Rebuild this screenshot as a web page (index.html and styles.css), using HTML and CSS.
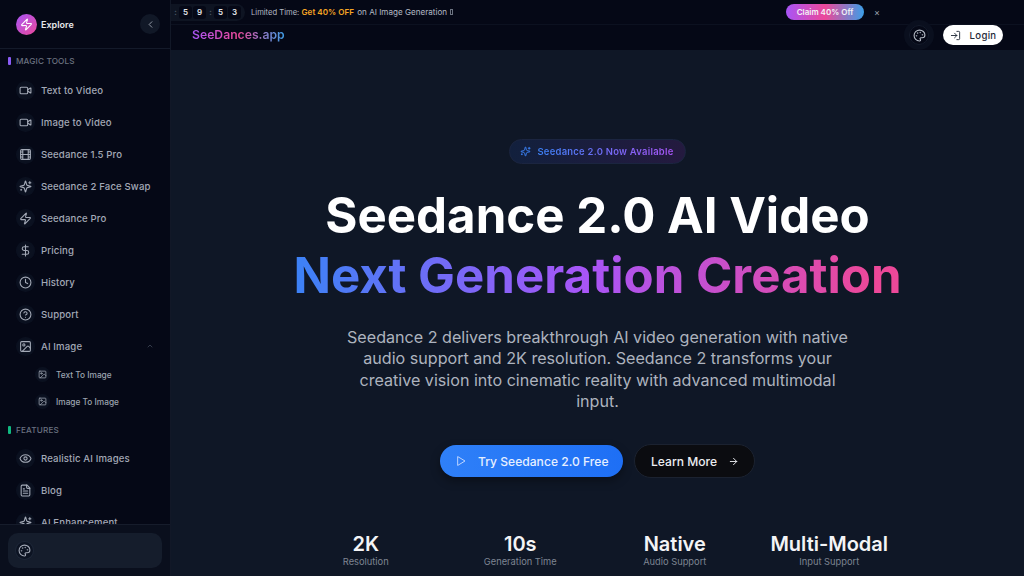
FILE: index.html
```html
<!DOCTYPE html>
<html lang="en">
<head>
<meta charset="utf-8">
<title>SeeDances.app</title>
<link rel="stylesheet" href="styles.css">
</head>
<body>
<svg class="defs" width="0" height="0" aria-hidden="true">
  <symbol id="i-video" viewBox="0 0 24 24"><path d="m16 13 5.223 3.482a.5.5 0 0 0 .777-.416V7.87a.5.5 0 0 0-.752-.432L16 10.5"/><rect x="2" y="6" width="14" height="12" rx="2"/></symbol>
  <symbol id="i-film" viewBox="0 0 24 24"><rect x="3" y="3" width="18" height="18" rx="2"/><path d="M7 3v18M3 7.5h4M3 12h18M3 16.5h4M17 3v18M17 7.5h4M17 16.5h4"/></symbol>
  <symbol id="i-sparkles" viewBox="0 0 24 24"><path d="M9.937 15.5A2 2 0 0 0 8.5 14.063l-6.135-1.582a.5.5 0 0 1 0-.962L8.5 9.936A2 2 0 0 0 9.937 8.5l1.582-6.135a.5.5 0 0 1 .963 0L14.063 8.5A2 2 0 0 0 15.5 9.937l6.135 1.581a.5.5 0 0 1 0 .964L15.5 14.063a2 2 0 0 0-1.437 1.437l-1.582 6.135a.5.5 0 0 1-.963 0z"/><path d="M20 3v4M22 5h-4M4 17v2M5 18H3"/></symbol>
  <symbol id="i-zap" viewBox="0 0 24 24"><path d="M4 14a1 1 0 0 1-.78-1.63l9.9-10.2a.5.5 0 0 1 .86.46l-1.92 6.02A1 1 0 0 0 13 10h7a1 1 0 0 1 .78 1.63l-9.9 10.2a.5.5 0 0 1-.86-.46l1.92-6.02A1 1 0 0 0 11 14z"/></symbol>
  <symbol id="i-dollar" viewBox="0 0 24 24"><path d="M12 2v20M17 5H9.5a3.5 3.5 0 0 0 0 7h5a3.5 3.5 0 0 1 0 7H6"/></symbol>
  <symbol id="i-clock" viewBox="0 0 24 24"><circle cx="12" cy="12" r="10"/><path d="M12 6v6l4 2"/></symbol>
  <symbol id="i-help" viewBox="0 0 24 24"><circle cx="12" cy="12" r="10"/><path d="M9.09 9a3 3 0 0 1 5.83 1c0 2-3 3-3 3M12 17h.01"/></symbol>
  <symbol id="i-image" viewBox="0 0 24 24"><rect x="3" y="3" width="18" height="18" rx="2"/><circle cx="9" cy="9" r="2"/><path d="m21 15-3.086-3.086a2 2 0 0 0-2.828 0L6 21"/></symbol>
  <symbol id="i-eye" viewBox="0 0 24 24"><path d="M2.062 12.348a1 1 0 0 1 0-.696 10.75 10.75 0 0 1 19.876 0 1 1 0 0 1 0 .696 10.75 10.75 0 0 1-19.876 0"/><circle cx="12" cy="12" r="3"/></symbol>
  <symbol id="i-file" viewBox="0 0 24 24"><path d="M15 2H6a2 2 0 0 0-2 2v16a2 2 0 0 0 2 2h12a2 2 0 0 0 2-2V7Z"/><path d="M14 2v4a2 2 0 0 0 2 2h4M10 9H8M16 13H8M16 17H8"/></symbol>
  <symbol id="i-palette" viewBox="0 0 24 24"><path d="M12 22a1 1 0 0 1 0-20 10 9 0 0 1 10 9 5 5 0 0 1-5 5h-2.25a1.75 1.75 0 0 0-1.4 2.8l.3.4a1.75 1.75 0 0 1-1.4 2.8z"/><circle cx="13.5" cy="6.5" r=".5"/><circle cx="17.5" cy="10.5" r=".5"/><circle cx="6.5" cy="12.5" r=".5"/><circle cx="8.5" cy="7.5" r=".5"/></symbol>
  <symbol id="i-login" viewBox="0 0 24 24"><path d="m10 17 5-5-5-5M15 12H3M15 3h4a2 2 0 0 1 2 2v14a2 2 0 0 1-2 2h-4"/></symbol>
  <symbol id="i-play" viewBox="0 0 24 24"><path d="M6 3.5 20 12 6 20.5z"/></symbol>
  <symbol id="i-arrow" viewBox="0 0 24 24"><path d="M5 12h14M12 5l7 7-7 7"/></symbol>
  <symbol id="i-left" viewBox="0 0 24 24"><path d="m15 18-6-6 6-6"/></symbol>
  <symbol id="i-up" viewBox="0 0 24 24"><path d="m18 15-6-6-6 6"/></symbol>
</svg>

<aside class="sidebar">
  <header class="side-head">
    <span class="logo"><svg class="ic ic-logo"><use href="#i-zap"/></svg></span>
    <span class="logo-text">Explore</span>
    <button class="collapse"><svg class="ic ic-collapse"><use href="#i-left"/></svg></button>
  </header>
  <nav class="side-nav">
    <h3 class="group group-purple">MAGIC TOOLS</h3>
    <a class="item"><span class="bubble"><svg class="ic"><use href="#i-video"/></svg></span>Text to Video</a>
    <a class="item"><span class="bubble"><svg class="ic"><use href="#i-video"/></svg></span>Image to Video</a>
    <a class="item"><span class="bubble"><svg class="ic"><use href="#i-film"/></svg></span>Seedance 1.5 Pro</a>
    <a class="item"><span class="bubble"><svg class="ic"><use href="#i-sparkles"/></svg></span>Seedance 2 Face Swap</a>
    <a class="item"><span class="bubble"><svg class="ic"><use href="#i-zap"/></svg></span>Seedance Pro</a>
    <a class="item"><span class="bubble"><svg class="ic"><use href="#i-dollar"/></svg></span>Pricing</a>
    <a class="item"><span class="bubble"><svg class="ic"><use href="#i-clock"/></svg></span>History</a>
    <a class="item"><span class="bubble"><svg class="ic"><use href="#i-help"/></svg></span>Support</a>
    <a class="item"><span class="bubble"><svg class="ic"><use href="#i-image"/></svg></span>AI Image<svg class="ic ic-up"><use href="#i-up"/></svg></a>
    <a class="sub"><span class="bubble bubble-sm"><svg class="ic ic-sm"><use href="#i-image"/></svg></span>Text To Image</a>
    <a class="sub"><span class="bubble bubble-sm"><svg class="ic ic-sm"><use href="#i-image"/></svg></span>Image To Image</a>
    <h3 class="group group-green">FEATURES</h3>
    <a class="item"><span class="bubble"><svg class="ic"><use href="#i-eye"/></svg></span>Realistic AI Images</a>
    <a class="item"><span class="bubble"><svg class="ic"><use href="#i-file"/></svg></span>Blog</a>
    <a class="item"><span class="bubble"><svg class="ic"><use href="#i-sparkles"/></svg></span>AI Enhancement</a>
  </nav>
  <footer class="side-foot">
    <div class="foot-card"><span class="bubble bubble-foot"><svg class="ic"><use href="#i-palette"/></svg></span></div>
  </footer>
</aside>

<main class="main">
  <div class="promo">
    <div class="timer">
      <span class="colon">:</span><b>5</b><b>9</b><span class="colon">:</span><b>5</b><b>3</b>
    </div>
    <span class="promo-text"><span class="promo-label">Limited Time:</span> <strong>Get 40% OFF</strong> on AI Image Generation <i class="tofu"></i></span>
    <a class="claim">Claim 40% Off</a>
    <span class="close">×</span>
  </div>
  <div class="topnav">
    <a class="brand">SeeDances.app</a>
    <span class="theme"><svg class="ic"><use href="#i-palette"/></svg></span>
    <a class="login"><svg class="ic ic-login"><use href="#i-login"/></svg>Login</a>
  </div>
  <section class="hero">
    <div class="badge"><svg class="ic ic-badge"><use href="#i-sparkles"/></svg><span>Seedance 2.0 Now Available</span></div>
    <h1 class="title">Seedance 2.0 AI Video<span class="title-grad">Next Generation Creation</span></h1>
    <p class="lead">Seedance 2 delivers breakthrough AI video generation with native audio support and 2K resolution. Seedance 2 transforms your creative vision into cinematic reality with advanced multimodal input.</p>
    <div class="cta">
      <a class="btn btn-primary"><svg class="ic ic-play"><use href="#i-play"/></svg>Try Seedance 2.0 Free</a>
      <a class="btn btn-dark">Learn More<svg class="ic ic-arrow"><use href="#i-arrow"/></svg></a>
    </div>
    <div class="stats">
      <div class="stat"><strong>2K</strong><span>Resolution</span></div>
      <div class="stat"><strong>10s</strong><span>Generation Time</span></div>
      <div class="stat"><strong>Native</strong><span>Audio Support</span></div>
      <div class="stat"><strong>Multi-Modal</strong><span>Input Support</span></div>
    </div>
  </section>
</main>
</body>
</html>
```
FILE: styles.css
```css
* { box-sizing: border-box; }
html, body { height: 100%; }
body {
  margin: 0;
  display: flex;
  height: 576px;
  overflow: hidden;
  background: #0f1726;
  color: #fff;
  font-family: Inter, "Liberation Sans", sans-serif;
}
.defs { position: absolute; }
a { color: inherit; text-decoration: none; }
h1, h3, p { margin: 0; }
.ic {
  width: 13px;
  height: 13px;
  fill: none;
  stroke: currentColor;
  stroke-width: 2;
  stroke-linecap: round;
  stroke-linejoin: round;
  flex: none;
}

/* Sidebar */
.sidebar {
  width: 171px;
  flex: none;
  display: flex;
  flex-direction: column;
  background: #050816;
  border-right: 1px solid #121827;
}
.side-head {
  height: 49px;
  flex: none;
  display: flex;
  align-items: center;
  padding: 0 10px 0 16px;
  border-bottom: 1px solid #141a2a;
}
.logo {
  width: 21px;
  height: 21px;
  border-radius: 50%;
  background: linear-gradient(135deg, #a855f7, #ec4899);
  display: flex;
  align-items: center;
  justify-content: center;
  color: #fff;
}
.logo-text { margin-left: 4px; font-size: 9px; font-weight: 600; color: #e5e7eb; }
.collapse {
  margin-left: auto;
  width: 20px;
  height: 20px;
  padding: 0;
  border: 0;
  border-radius: 50%;
  background: #111827;
  color: #9ca3af;
  display: flex;
  align-items: center;
  justify-content: center;
}
.ic-collapse { width: 11px; height: 11px; }
.side-nav {
  flex: 1;
  min-height: 0;
  overflow: hidden;
  padding: 6px 0 0;
}
.group {
  display: flex;
  align-items: center;
  gap: 5px;
  height: 12px;
  padding-left: 8px;
  margin-bottom: 7px;
  font-size: 8.2px;
  font-weight: 500;
  letter-spacing: .15px;
  color: #6b7280;
}
.group::before { content: ""; width: 3px; height: 8px; border-radius: 1px; }
.group-purple::before { background: #8b5cf6; }
.group-green::before { background: #10b981; }
.item {
  height: 32px;
  display: flex;
  align-items: center;
  gap: 7px;
  padding-left: 17px;
  padding-right: 16px;
  font-size: 9.6px;
  font-weight: 500;
  letter-spacing: .13px;
  white-space: nowrap;
  color: #a3a9b6;
}
.bubble {
  width: 17px;
  height: 17px;
  margin: 0;
  border-radius: 50%;
  background: #0b1120;
  box-shadow: 0 0 0 1px #0b1120;
  display: flex;
  align-items: center;
  justify-content: center;
  color: #a3a9b6;
  flex: none;
}
.ic-up { margin-left: auto; width: 8px; height: 8px; color: #4b5563; }
.sub {
  height: 27px;
  display: flex;
  align-items: center;
  gap: 7px;
  padding-left: 36px;
  font-size: 8.3px;
  font-weight: 500;
  color: #9ca3af;
}
.item + .sub { margin-top: -1px; }
.bubble-sm { width: 13px; height: 13px; }
.ic-sm { width: 9px; height: 9px; }
.sub + .group { margin-top: 9px; margin-bottom: 6px; }
.side-foot {
  height: 52px;
  flex: none;
  padding: 8px;
  background: #0a0f1d;
  border-top: 1px solid #161c2b;
}
.foot-card {
  height: 35px;
  border-radius: 10px;
  background: #151d2c;
  display: flex;
  align-items: center;
  padding-left: 8px;
}
.bubble-foot { background: #0c1322; box-shadow: 0 0 0 1px #1c2536; }

/* Main */
.main { flex: 1; min-width: 0; display: flex; flex-direction: column; }
.promo {
  height: 25px;
  flex: none;
  display: flex;
  align-items: center;
  background: #050816;
  border-bottom: 1px solid #0c1120;
}
.timer {
  width: 74px;
  height: 17px;
  display: flex;
  align-items: center;
  padding-left: 1px;
  border-radius: 0 9px 9px 0;
  background: #0e1422;
  font-size: 8px;
  font-weight: 600;
  color: #e5e7eb;
}
.timer b {
  width: 13px;
  height: 13px;
  margin-right: 1px;
  border-radius: 3px;
  background: #050816;
  font-weight: 600;
  display: flex;
  align-items: center;
  justify-content: center;
}
.colon { width: 7px; text-align: center; color: #4b5563; }
.promo-text { margin-left: 6px; font-size: 8.1px; color: #b4bac5; white-space: nowrap; }
.promo-label { font-size: 7.6px; }
.promo-text strong { font-weight: 600; color: #f5a524; margin-right: 1px; }
.tofu {
  display: inline-block;
  width: 3px;
  height: 6px;
  margin-left: 1px;
  border: 1px solid #6b7280;
}
.claim {
  margin-left: auto;
  width: 78px;
  height: 16px;
  border-radius: 8px;
  background: linear-gradient(90deg, #a855f7, #ec4899 50%, #3b9fe8);
  font-size: 8px;
  font-weight: 600;
  color: #f3f4f6;
  display: flex;
  align-items: center;
  justify-content: center;
}
.close { width: 26px; margin-right: 134px; text-align: center; font-size: 9px; color: #9ca3af; }
.topnav {
  height: 25px;
  flex: none;
  display: flex;
  align-items: center;
  padding: 0 21px 5px;
  background: #050816;
}
.brand {
  margin-bottom: 2px;
  font-size: 12.2px;
  font-weight: 600;
  background: linear-gradient(90deg, #a855f7, #ec4899 50%, #3b9fe8);
  -webkit-background-clip: text;
  background-clip: text;
  color: transparent;
}
.theme {
  margin-left: auto;
  width: 20px;
  height: 20px;
  border-radius: 50%;
  border: 1px solid #141b2b;
  box-shadow: 0 0 0 5px #0a0f1e;
  display: flex;
  align-items: center;
  justify-content: center;
  color: #b4bac5;
}
.login {
  margin-left: 14px;
  width: 60px;
  height: 20px;
  border-radius: 10px;
  background: #fff;
  color: #1f2937;
  font-size: 9.6px;
  font-weight: 500;
  letter-spacing: .3px;
  display: flex;
  align-items: center;
  justify-content: center;
  gap: 9px;
}
.ic-login { width: 11px; height: 11px; }

/* Hero */
.hero {
  flex: 1;
  min-height: 0;
  display: flex;
  flex-direction: column;
  align-items: center;
  padding-top: 89px;
  background: #0f1726;
}
.badge {
  height: 25px;
  padding: 0 11px 0 10px;
  border-radius: 13px;
  border: 1px solid #1b2540;
  background: linear-gradient(90deg, #12203d, #241a3f);
  display: flex;
  align-items: center;
  gap: 6px;
  font-size: 9.45px;
  font-weight: 600;
  letter-spacing: .25px;
}
.ic-badge { color: #3b82f6; width: 11px; height: 11px; }
.badge span {
  background: linear-gradient(90deg, #3b82f6, #a855f7);
  -webkit-background-clip: text;
  background-clip: text;
  color: transparent;
}
.title {
  margin-top: 21px;
  font-size: 49.2px;
  line-height: 60px;
  font-weight: 700;
  text-align: center;
  color: #fff;
}
.title-grad {
  display: block;
  background: linear-gradient(90deg, #3b82f6, #a855f7 48%, #ec4899 95%);
  -webkit-background-clip: text;
  background-clip: text;
  color: transparent;
}
.lead {
  margin-top: 22px;
  width: 510px;
  font-size: 16.12px;
  line-height: 21.25px;
  text-align: center;
  color: #adb3be;
}
.cta { margin-top: 32px; display: flex; align-items: center; gap: 11px; }
.btn {
  border-radius: 17px;
  display: flex;
  align-items: center;
  font-size: 12.1px;
  font-weight: 500;
}
.btn-primary {
  width: 183px;
  height: 32px;
  padding-left: 15px;
  gap: 11px;
  background: linear-gradient(90deg, #2f80f8, #1e6ff5);
  color: #e6efff;
  box-shadow: 0 4px 10px rgba(0,0,0,.35);
}
.ic-play { width: 12px; height: 12px; color: #bcd4ff; }
.btn-dark {
  width: 121px;
  height: 34px;
  padding-left: 16px;
  gap: 11px;
  background: #0b0c10;
  border: 1px solid #1b2230;
  color: #eceef2;
}
.ic-arrow { width: 11px; height: 11px; }
.stats { margin-top: 53px; width: 618px; display: grid; grid-template-columns: repeat(4, 1fr); }
.stat { display: flex; flex-direction: column; align-items: center; }
.stat strong { font-size: 20px; line-height: 26px; font-weight: 600; color: #f3f4f6; }
.stat span { font-size: 9.3px; line-height: 10px; color: #7e8592; }
```
